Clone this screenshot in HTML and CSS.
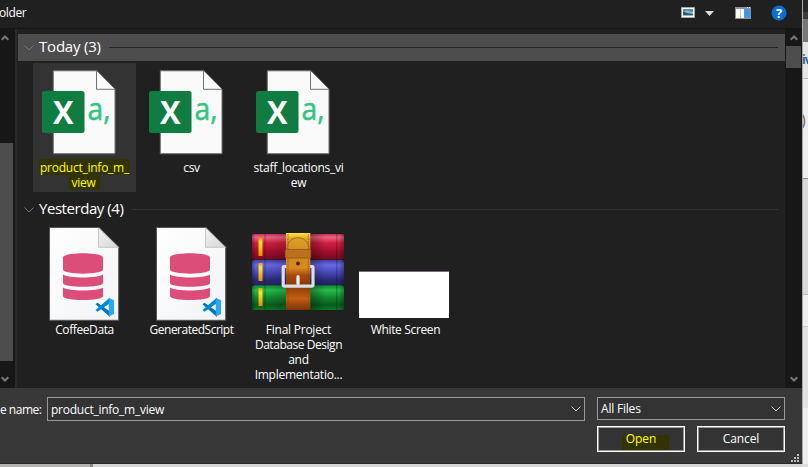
FILE: index.html
```html
<!DOCTYPE html>
<html lang="en">
<head>
<meta charset="utf-8">
<title>Open</title>
<link rel="stylesheet" href="styles.css">
</head>
<body>
<svg class="defs" width="0" height="0">
  <defs>
    <linearGradient id="fold" x1="0" y1="0" x2="1" y2="1"><stop offset="0" stop-color="#f4f4f4"/><stop offset="1" stop-color="#d4d4d4"/></linearGradient>
    <linearGradient id="paper" x1="0" y1="0" x2="1" y2="1"><stop offset="0" stop-color="#fff"/><stop offset="1" stop-color="#f1f3f5"/></linearGradient>
    <linearGradient id="red" x1="0" y1="0" x2="0" y2="1"><stop offset="0" stop-color="#c92c52"/><stop offset=".12" stop-color="#ee6484"/><stop offset=".35" stop-color="#d0203f"/><stop offset=".7" stop-color="#a10d2c"/><stop offset="1" stop-color="#730b20"/></linearGradient>
    <linearGradient id="blue" x1="0" y1="0" x2="0" y2="1"><stop offset="0" stop-color="#4141a5"/><stop offset=".2" stop-color="#6b68e5"/><stop offset=".45" stop-color="#4d4dc0"/><stop offset=".8" stop-color="#292a79"/><stop offset="1" stop-color="#23245c"/></linearGradient>
    <linearGradient id="green" x1="0" y1="0" x2="0" y2="1"><stop offset="0" stop-color="#158238"/><stop offset=".2" stop-color="#27bd4c"/><stop offset=".45" stop-color="#148f32"/><stop offset=".8" stop-color="#075b1c"/><stop offset="1" stop-color="#0a7926"/></linearGradient>
    <linearGradient id="strap" x1="0" y1="0" x2="0" y2="1"><stop offset="0" stop-color="#ffe84a"/><stop offset=".08" stop-color="#dda027"/><stop offset=".28" stop-color="#c98820"/><stop offset=".45" stop-color="#d98a20"/><stop offset=".55" stop-color="#a84b0b"/><stop offset=".68" stop-color="#873807"/><stop offset=".85" stop-color="#c35d12"/><stop offset="1" stop-color="#7c3308"/></linearGradient>
    <linearGradient id="tab" x1="0" y1="0" x2="0" y2="1"><stop offset="0" stop-color="#e9a010"/><stop offset=".25" stop-color="#ffe52a"/><stop offset="1" stop-color="#e98a05"/></linearGradient>
    <linearGradient id="shade"><stop offset="0" stop-opacity=".3"/><stop offset=".04" stop-opacity="0"/><stop offset=".13" stop-opacity="0"/><stop offset=".14" stop-opacity=".25"/><stop offset=".16" stop-opacity="0"/><stop offset=".62" stop-opacity=".35"/><stop offset=".8" stop-opacity="0"/><stop offset=".91" stop-opacity="0"/><stop offset=".92" stop-opacity=".25"/><stop offset=".94" stop-opacity="0"/><stop offset="1" stop-opacity=".3"/></linearGradient>
    <symbol id="csv" viewBox="0 0 103 97">
      <path d="M20.3 7.8H64L82 26v64.7H20.3z" fill="#fafafa" stroke="#73706d"/>
      <path d="M63.5 8v18.3H82" fill="none" stroke="#73706d"/>
      <rect x="9" y="28" width="42.5" height="42" rx="2.500" fill="#107c41"/>
      <text x="20" y="60.500" class="glyph-x" textLength="20.500" lengthAdjust="spacingAndGlyphs">X</text>
      <text x="54.500" y="56.600" class="glyph-a" textLength="23" lengthAdjust="spacingAndGlyphs">a,</text>
    </symbol>
    <symbol id="sql" viewBox="0 0 103 97">
      <path d="M16.500 2.500H66l19.700 19.700v73.100H16.500z" fill="url(#paper)" stroke="#555"/>
      <path d="M65.500 3v19.300h20z" fill="url(#fold)" stroke="#bbb" stroke-width=".8"/>
      <path d="M30 32.500c0-5.600 40-5.600 40 0v12c0 5.500-40 5.500-40 0zM30 49.500c5 4 35 4 40 0v8.500c0 5-40 5-40 0zM30 62.500c5 4 35 4 40 0v8.500c0 5.300-40 5.300-40 0z" fill="#dc4d79"/>
      <path d="M62.500 79.200l1.900-1.400L77 86.500v5.600z" fill="#0075bd"/>
      <path d="M62.500 85l1.900 1.700L77 78.200V72.400z" fill="#0088d1"/>
      <path d="M75.800 73l5.200 2.300v13.600l-5.200 2.700z" fill="#29a7f2"/>
    </symbol>
    <symbol id="rar" viewBox="0 0 103 97">
      <rect x="5" y="9" width="92" height="25.500" rx="2" fill="url(#red)"/>
      <rect x="5" y="35" width="92" height="25" rx="2" fill="url(#blue)"/>
      <rect x="5" y="60.300" width="92" height="24.700" rx="2" fill="url(#green)"/>
      <rect x="5" y="9" width="92" height="76" rx="2" fill="url(#shade)"/>
      <path d="M11.500 13h4v18h-4z" fill="url(#tab)"/><path d="M11.500 38h4v18h-4z" fill="url(#tab)"/><path d="M11.500 63h4v18h-4z" fill="url(#tab)"/>
      <path d="M39 8h24.300v77H39z" fill="url(#strap)"/>
      <path d="M41 9v75M61.300 9v75" stroke="#804410" stroke-width=".7" stroke-dasharray="1.300 1"/>
      <path d="M40 24c0-15 22-15 22 0" fill="none" stroke="#a8691a"/>
      <rect x="38.200" y="24.500" width="25.600" height="8.500" rx="1" fill="#bb711d" stroke="#8e5012" stroke-width=".7"/>
      <circle cx="51" cy="38.500" r="2" fill="#4c2908"/>
      <path d="M39 41.500h-2q-.8 0-.8 1v17.300q0 1.400 1.400 1.400h27q1.400 0 1.400-1.400V42.500q0-1-.8-1h-2" fill="none" stroke="#d9dfe7" stroke-width="3.200"/>
      <path d="M51 51.500v7" stroke="#edf0f5" stroke-width="3.200" stroke-linecap="round"/>
    </symbol>
    <symbol id="chev" viewBox="0 0 12 8"><path d="M1.500 1.500l4.500 4.500 4.500-4.500" fill="none" stroke="currentColor"/></symbol>
    <symbol id="arrow" viewBox="0 0 8 7"><path d="M.7 1.200L4 4.500l3.300-3.300" fill="none" stroke="currentColor" stroke-width="2"/></symbol>
  </defs>
</svg>
<div class="screen">
  <div class="dialog">
    <div class="toolbar">
      <span class="folder">older</span>
      <svg class="tools" width="128" height="27" viewBox="0 0 128 27">
        <path d="M1.500 7.500h13v10h-13z" fill="#fff" stroke="#aaa"/>
        <path d="M3 9h10v3H3z" fill="#4d8ed0"/><path d="M3 12l4-1.500 6 2V16H3z" fill="#8db7ce"/><path d="M3 11.500l4 1.500 6 1v1H3z" fill="#315f55"/>
        <path d="M25 11h9l-4.500 5z" fill="#ddd"/>
        <path d="M55 7h16v12H55z" fill="#8b9299"/><path d="M56 9h4v9h-4zM60.500 9h3.500v9h-3.500z" fill="#fff"/><path d="M64.500 9h5.500v9h-5.500z" fill="#3c9ae4"/><path d="M67 7.500h1M69 7.500h1" stroke="#fff"/>
        <circle cx="99" cy="13" r="7.500" fill="#0870d2"/>
        <text x="99" y="17.600" class="help" text-anchor="middle">?</text>
      </svg>
    </div>
    <div class="main">
      <div class="scroll nav-scroll">
        <svg class="up" width="8" height="7"><use href="#arrow"/></svg>
        <div class="thumb"></div>
        <svg width="8" height="7"><use href="#arrow"/></svg>
      </div>
      <div class="files">
        <section class="group">
          <header class="head active"><svg width="12" height="8"><use href="#chev"/></svg><h2 class="today">Today (3)</h2><i></i></header>
          <div class="row">
            <div class="tile selected"><svg width="103" height="97"><use href="#csv"/></svg><p class="l1"><mark>product_info_m_</mark><br><mark class="m2">view</mark></p></div>
            <div class="tile"><svg width="103" height="97"><use href="#csv"/></svg><p>csv</p></div>
            <div class="tile"><svg width="103" height="97"><use href="#csv"/></svg><p class="l3">staff_locations_vi<br>ew</p></div>
          </div>
        </section>
        <section class="group">
          <header class="head"><svg width="12" height="8"><use href="#chev"/></svg><h2 class="yest">Yesterday (4)</h2><i></i></header>
          <div class="row">
            <div class="tile"><svg width="103" height="97"><use href="#sql"/></svg><p class="l4">CoffeeData</p></div>
            <div class="tile"><svg width="103" height="97"><use href="#sql"/></svg><p class="l5">GeneratedScript</p></div>
            <div class="tile"><svg width="103" height="97"><use href="#rar"/></svg><p class="l6">Final Project<br><span class="tight">Database Design</span><br>and<br>Implementatio...</p></div>
            <div class="tile"><div class="thumbnail"></div><p class="l7">White Screen</p></div>
          </div>
        </section>
      </div>
      <div class="scroll file-scroll">
        <svg class="up" width="8" height="7"><use href="#arrow"/></svg>
        <div class="thumb"></div>
        <svg width="8" height="7"><use href="#arrow"/></svg>
      </div>
    </div>
    <div class="footer">
      <label class="name">e name:</label>
      <div class="field"><span class="value">product_info_m_view</span><svg width="12" height="8"><use href="#chev"/></svg></div>
      <div class="actions">
        <div class="select"><span>All Files</span><svg width="12" height="8"><use href="#chev"/></svg></div>
        <div class="buttons">
          <div class="btn open"><span>Open</span></div>
          <div class="btn">Cancel</div>
        </div>
      </div>
      <svg class="grip" width="8" height="8"><path d="M6 0h2v2H6zM3 3h2v2H3zM6 3h2v2H6zM0 6h2v2H0zM3 6h2v2H3zM6 6h2v2H6z" fill="#bbb"/></svg>
    </div>
  </div>
  <div class="behind">
    <div class="b1"></div><div class="b2"></div><div class="b3"></div>
    <div class="b4">iv</div><div class="b5"><span>)</span></div><div class="b6"></div><div class="b7"></div><div class="b8"></div>
  </div>
  <div class="below"></div>
</div>
</body>
</html>
```
FILE: styles.css
```css
* { box-sizing: border-box; }
body { margin: 0; font: 12px/15px "Open Sans", "Noto Sans", sans-serif; color: #fff; overflow: hidden; }
svg { display: block; flex: none; }
.defs { position: absolute; }
.glyph-x { font: bold 33px "Open Sans", sans-serif; fill: #fff; }
.glyph-a { font: 31px "Open Sans", sans-serif; fill: #33c481; stroke: #33c481; stroke-width: .5px; }
.screen { width: 808px; height: 467px; display: grid; grid-template: 464px 3px / 802px 6px; background: #ddd; }
.dialog { display: flex; flex-direction: column; background: #202020; min-width: 0; }
.toolbar { height: 29px; display: flex; justify-content: space-between; border-bottom: 1px solid #151515; }
.folder { padding-top: 5px; letter-spacing: -.4px; margin-left: -1px; }
.tools { margin-right: -6px; }
.help { font: bold 13px "Open Sans", sans-serif; fill: #fff; }
.main { display: flex; height: 359px; }
.scroll { background: #171717; display: flex; flex-direction: column; align-items: center; justify-content: space-between; color: #777; flex: none; padding: 5px 0 5px; }
.up { transform: rotate(180deg); }
.thumb { background: #4d4d4d; }
.nav-scroll { width: 17px; padding-right: 5px; border-right: 2px solid #292929; }
.nav-scroll .thumb { width: 13px; height: 218px; margin-top: 87px; align-self: flex-start; }
.file-scroll { width: 17px; }
.file-scroll .thumb { width: 15px; height: 22px; margin: 5px 0 auto; }
.files { width: 767px; margin-left: 1px; padding-top: 5px; }
.group { height: 162px; }
.head { height: 27px; display: flex; align-items: center; padding: 0 7px 0 6px; color: #777; }
.head svg { margin: 0 3px 0 -1px; }
.head h2 { font: 15px/20px "Open Sans", sans-serif; color: #fff; margin: 0 8px 3px 0; white-space: nowrap; }
.head i { flex: 1; height: 1px; background: #333; }
.active { background: #4d4d4d; }
.active i { background: #252525; }
.head .today { width: 62px; margin-left: 1px; letter-spacing: -.2px; }
.head .yest { width: 85px; margin-left: 1px; letter-spacing: -.45px; }
.row { display: flex; gap: 4px; padding: 2px 0 0 15px; }
.tile { width: 103px; height: 129px; }
.selected { background: #333; }
.tile p { margin: 0; text-align: center; white-space: nowrap; letter-spacing: -.25px; }
.tile .l4 { letter-spacing: -.4px; }
.tile .l5 { letter-spacing: -.5px; }
.tight { letter-spacing: -.45px; }
.tile .l7 { letter-spacing: -.35px; }
mark { display: inline-block; height: 15px; padding: 0 1px; background: #333300; color: #ff0; box-shadow: 0 -1px #333300; }
.m2 { padding: 0 4px 0 2px; }
.thumbnail { width: 90px; height: 47px; margin: 46px 0 4px 5px; background: #fff; border-top: 1px solid #776c77; }
.row:has(.thumbnail) .tile:last-child { display: flow-root; }
.footer { height: 76px; background: #383838; display: flex; padding-top: 9px; position: relative; border-bottom: 1px solid #292929; }
.name { width: 47px; padding-top: 5px; letter-spacing: -.5px; white-space: nowrap; }
.field { width: 538px; height: 24px; border: 1px solid #999; background: #333; display: flex; align-items: center; justify-content: space-between; padding: 0 2px 0 3px; letter-spacing: -.25px; }
.actions { width: 188px; margin-left: 12px; }
.select { height: 23px; border: 1px solid #999; background: #333; display: flex; align-items: center; justify-content: space-between; padding: 0 2px 0 3px; letter-spacing: -.2px; }
.field svg, .select svg { color: #ccc; }
.buttons { display: flex; justify-content: space-between; margin-top: 6px; }
.btn { width: 88px; height: 26px; border: 1px solid #fff; box-shadow: inset 0 0 0 1px #999; background: #333; display: flex; align-items: center; justify-content: center; padding-bottom: 1px; letter-spacing: -.1px; }
.open { color: #ff0; background: linear-gradient(#333300, #333300) 24px 8px / 47px 16px no-repeat, #333; }
.grip { position: absolute; right: 3px; bottom: 1px; }
.behind { display: flex; flex-direction: column; background: #eee; color: #2b6385; overflow: hidden; border-left: 1px solid #aaa; }
.b1 { height: 12px; background: #292929; } .b2 { height: 7px; background: #3c3c3c; } .b3 { height: 23px; background: #777; }
.b4 { height: 37px; padding-top: 10px; margin-left: -1px; border-bottom: 1px solid #bbb; font-weight: bold; letter-spacing: -1px; background: #e5e5e5; }
.b5 { height: 100px; padding-top: 34px; font-size: 16px; color: #6c6470; border-bottom: 1px solid #888; }
.b5 span { margin-left: -2px; }
.b6 { height: 116px; background: #d9d9d9; border-bottom: 1px solid #bbb; } .b7 { height: 32px; border-bottom: 1px solid #ccc; } .b8 { height: 81px; background: #e1e1e1; }
.below { background: linear-gradient(90deg, #b5b2b2 90px, #888 90px, #888 93px, #d5d5d5 93px); }
```
